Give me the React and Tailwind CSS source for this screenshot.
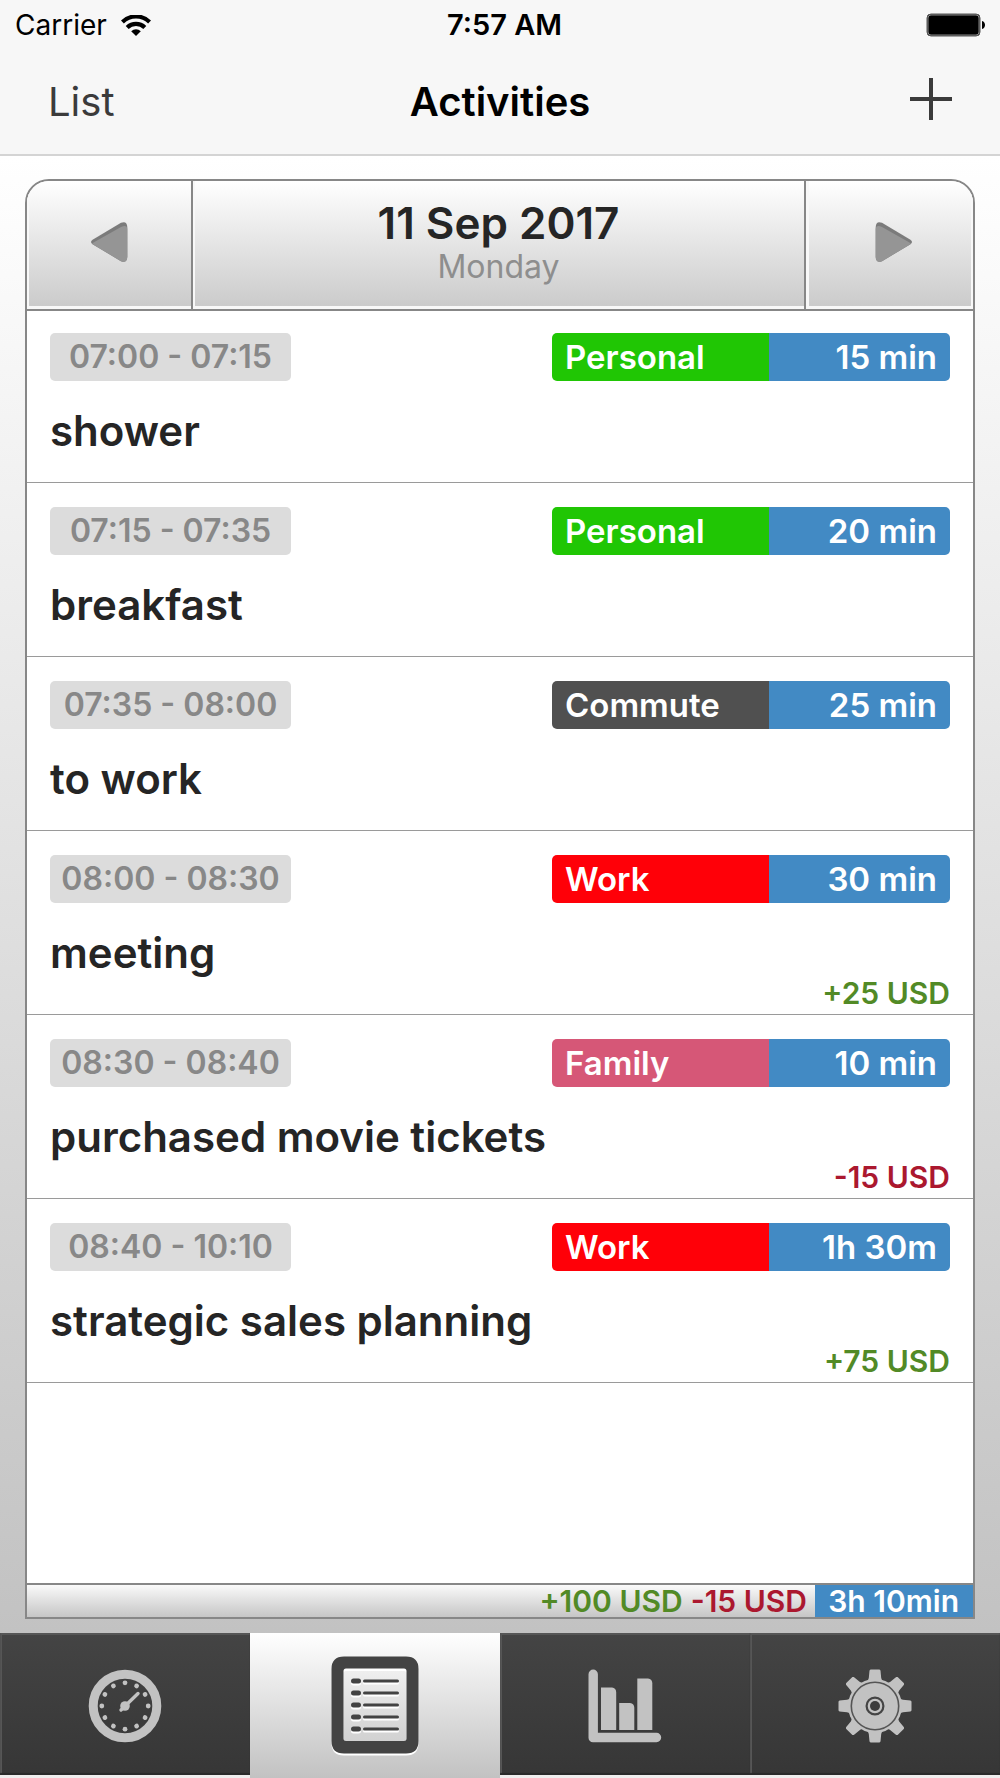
const activities = [
  { time: "07:00 - 07:15", title: "shower", category: "Personal", duration: "15 min" },
  { time: "07:15 - 07:35", title: "breakfast", category: "Personal", duration: "20 min" },
  { time: "07:35 - 08:00", title: "to work", category: "Commute", duration: "25 min" },
  { time: "08:00 - 08:30", title: "meeting", category: "Work", duration: "30 min", amount: "+25 USD" },
  { time: "08:30 - 08:40", title: "purchased movie tickets", category: "Family", duration: "10 min", amount: "-15 USD" },
  { time: "08:40 - 10:10", title: "strategic sales planning", category: "Work", duration: "1h 30m", amount: "+75 USD" },
];

const categoryColors = {
  Personal: "bg-[#20c604]",
  Commute: "bg-[#505050]",
  Work: "bg-[#ff0008]",
  Family: "bg-[#d65777]",
};

const getAmountColor = (amount) => (amount.startsWith("-") ? "text-[#ab182f]" : "text-[#528a26]");

function StatusBar() {
  return (
    <div className="grid h-[50px] grid-cols-3 items-center pr-[14px] pl-[15px] text-[28px]">
      <div className="flex items-center gap-[14px]">
        <span>Carrier</span>
        <svg width="30" height="21" viewBox="0 0 30 21" fill="none" stroke="#000" strokeWidth="4.2" aria-hidden="true">
          <path d="M1.4 7a19.4 19.4 0 0 1 27.2 0" />
          <path d="M6.2 12.4a12.6 12.6 0 0 1 17.6 0" />
          <path d="M10.2 16.2a7.2 7.2 0 0 1 9.6 0L15 21z" fill="#000" stroke="none" />
        </svg>
      </div>
      <span className="pl-2 text-center text-[29px] font-semibold">7:57 AM</span>
      <svg className="justify-self-end" width="60" height="24" viewBox="0 0 60 24" aria-hidden="true">
        <rect x="1" y="1" width="53" height="22" rx="4" fill="#000" stroke="#555" />
        <rect x="2" y="2" width="51" height="20" rx="3" fill="#000" stroke="#aaa" strokeWidth="0.8" />
        <path d="M56 8c4 1 4 7 0 8z" />
      </svg>
    </div>
  );
}

function Arrow({ flipped }) {
  return (
    <svg className={flipped ? "-scale-x-100" : ""} width="38" height="42" viewBox="0 0 38 42" aria-hidden="true">
      <path d="M3 18.5 31 1.8Q37 -.5 37.3 6V36Q37 42.5 31 40.2L3 23.5Q-1 21 3 18.5z" fill="#7b7b7b" />
      <path d="M3.5 21.5 31 6Q37 3 37.3 8V36Q37 42.5 31 40.2L3 23.5Q1.5 22.5 3.5 21.5z" fill="#959595" />
    </svg>
  );
}

function ActivityRow({ activity }) {
  const { time, title, category, duration, amount } = activity;

  return (
    <li className="border-b border-[#9a9a9a] px-[23px] pt-6 first:pt-[22px]">
      <div className="flex items-center justify-between text-[33px] leading-[48px]">
        <time className="w-[241px] rounded-[5px] bg-[#dcdcdc] text-center text-[32px] font-semibold text-[#888]">{time}</time>
        <div className="flex overflow-hidden rounded-[5px] font-semibold text-white">
          <span className={`w-[217px] pl-[13px] ${categoryColors[category]}`}>{category}</span>
          <span className="w-[181px] bg-[#428ac4] pr-[13px] text-right">{duration}</span>
        </div>
      </div>
      <h2 className={`mt-[25px] text-[42px] leading-[50px] font-semibold text-[#252525] ${amount ? "" : "mb-[26px]"}`}>{title}</h2>
      {amount && (
        <p className={`pb-[6px] text-right text-[30px] leading-[30px] font-semibold ${getAmountColor(amount)}`}>{amount}</p>
      )}
    </li>
  );
}

function GaugeIcon() {
  const dots = Array.from({ length: 12 }, (_, i) => i * 30);
  return (
    <svg width="74" height="74" viewBox="-37 -37 74 74" fill="#c2c2c2" aria-hidden="true">
      <circle r="31.8" fill="none" stroke="#c2c2c2" strokeWidth="9" />
      {dots.map((angle) => (
        <circle key={angle} cy="-23.2" r="2.4" transform={`rotate(${angle})`} />
      ))}
      <circle r="4.8" />
      <path d="M-4 4 13-12.5" stroke="#c2c2c2" strokeWidth="3.4" strokeLinecap="round" />
    </svg>
  );
}

function ListIcon() {
  const lines = [25, 37, 49, 61, 73];
  return (
    <svg width="88" height="100" viewBox="0 0 88 100" aria-hidden="true">
      <path
        fillRule="evenodd"
        fill="#fff"
        transform="translate(0 2)"
        d="M13 .5H75Q87.5.5 87.5 13V85Q87.5 97.5 75 97.5H13Q.5 97.5.5 85V13Q.5.5 13 .5zM15 13Q12.5 13 12.5 15.5V82.5Q12.5 85 15 85H73Q75.5 85 75.5 82.5V15.5Q75.5 13 73 13z"
      />
      <path
        fillRule="evenodd"
        fill="#434343"
        d="M13 .5H75Q87.5.5 87.5 13V85Q87.5 97.5 75 97.5H13Q.5 97.5.5 85V13Q.5.5 13 .5zM15 12.5Q12.5 12.5 12.5 15V82.5Q12.5 85 15 85H73Q75.5 85 75.5 82.5V15Q75.5 12.5 73 12.5z"
      />
      {lines.map((y) => (
        <g key={y}>
          <rect x="20" y={y - 0.5} width="10" height="5" rx="2.5" fill="#fff" />
          <rect x="32" y={y + 0.5} width="36" height="3" rx="1.5" fill="#fff" />
          <rect x="20" y={y - 2.5} width="10" height="5" rx="2.5" fill="#434343" />
          <rect x="32" y={y - 1.5} width="36" height="3" rx="1.5" fill="#434343" />
        </g>
      ))}
    </svg>
  );
}

function ChartIcon() {
  return (
    <svg width="74" height="74" viewBox="0 0 74 74" fill="#c2c2c2" aria-hidden="true">
      <path d="M.5 5.3a4.7 4.7 0 0 1 9.4 0V63.8H68.5a4.7 4.7 0 0 1 0 9.4H5A4.5 4.5 0 0 1 .5 68.7z" />
      <path d="M13 18.5H24Q28.2 19 28.2 23.5V61H13z" />
      <path d="M31.2 34H42Q46.3 34.5 46.3 39V61H31.2z" />
      <path d="M49.3 9.5H60Q64.3 10 64.3 14.5V61H49.3z" />
    </svg>
  );
}

function GearIcon() {
  const teeth = [0, 45, 90, 135, 180, 225, 270, 315];
  return (
    <svg width="74" height="74" viewBox="-37 -37 74 74" fill="#c2c2c2" aria-hidden="true">
      <circle r="27" />
      {teeth.map((angle) => (
        <path key={angle} d="M-9-24Q-6.5-25.5-6.2-28L-5.5-35.5-4.5-36.5H4.5L5.5-35.5 6.2-28Q6.5-25.5 9-24z" transform={`rotate(${angle})`} />
      ))}
      <circle r="23.7" fill="none" stroke="#555" strokeWidth="1.6" />
      <circle r="8.4" fill="none" stroke="#444" strokeWidth="2.2" />
      <circle r="5" fill="#3c3c3c" />
    </svg>
  );
}

const tabs = [
  { label: "Timer", Icon: GaugeIcon },
  { label: "Activities", Icon: ListIcon, active: true },
  { label: "Reports", Icon: ChartIcon },
  { label: "Settings", Icon: GearIcon },
];

export default function App() {
  const cell = "flex items-center justify-center bg-linear-to-b from-white to-[#cacaca]";

  return (
    <div className="flex min-h-screen flex-col bg-[#f7f7f7] font-[Inter,sans-serif] text-black">
      <header className="border-b-2 border-[#d4d4d4]">
        <StatusBar />
        <div className="grid h-[104px] grid-cols-3 items-center px-12 text-[40px]">
          <button className="justify-self-start text-[#3b3b3b]">List</button>
          <h1 className="text-center font-semibold">Activities</h1>
          <button className="justify-self-end pb-[6px]" aria-label="Add activity">
            <svg width="42" height="42" viewBox="0 0 42 42" stroke="#3b3b3b" strokeWidth="4" aria-hidden="true">
              <path d="M21 0V42M0 21H42" />
            </svg>
          </button>
        </div>
      </header>

      <main className="flex flex-1 flex-col bg-linear-to-b from-white to-[#c2c2c2] px-[25px] pt-[23px] pb-[14px]">
        <section className="flex flex-1 flex-col overflow-hidden rounded-t-[24px] border-2 border-[#878787] bg-white">
          <div className="flex h-[130px] border-b-2 border-[#878787]">
            <button className={`${cell} w-[166px] border-r-2 border-[#878787] pb-[6px] shadow-[inset_2px_-3px_0_#f8f8f8]`} aria-label="Previous day">
              <Arrow />
            </button>
            <div className={`${cell} flex-1 flex-col pb-1 shadow-[inset_2px_-3px_0_#f8f8f8]`}>
              <p className="text-[44px] leading-[48px] font-semibold text-[#252525]">11 Sep 2017</p>
              <p className="text-[32px] leading-[40px] text-[#8e8e8e]">Monday</p>
            </div>
            <button className={`${cell} w-[169px] border-l-2 border-[#878787] pb-[6px] pl-2 shadow-[inset_3px_-3px_0_#f8f8f8,inset_-2px_0_0_#f8f8f8]`} aria-label="Next day">
              <Arrow flipped />
            </button>
          </div>

          <ul className="flex-1">
            {activities.map((activity) => (
              <ActivityRow key={activity.time} activity={activity} />
            ))}
          </ul>

          <footer className="flex justify-end border-t-2 border-[#878787] bg-linear-to-b from-[#fafafa] to-[#c6c6c6] text-[30px] leading-[32px] font-semibold">
            <p className="flex gap-2 pr-2">
              <span className="text-[#528a26]">+100 USD</span>
              <span className="text-[#ab182f]">-15 USD</span>
            </p>
            <p className="w-[158px] bg-[#428ac4] pr-[14px] text-right text-white">3h 10min</p>
          </footer>
        </section>
      </main>

      <nav className="grid h-[145px] grid-cols-4">
        {tabs.map(({ label, Icon, active }) => (
          <button
            key={label}
            aria-label={label}
            aria-current={active ? "page" : undefined}
            className={`flex items-center justify-center bg-linear-to-b ${
              active
                ? "from-white to-[#c2c2c2]"
                : "from-[#444] to-[#363636] shadow-[inset_0_-3px_0_#efeded,inset_0_-5px_1px_#2a2a2a,inset_2px_2px_0_#565656]"
            }`}
          >
            <Icon />
          </button>
        ))}
      </nav>
    </div>
  );
}
